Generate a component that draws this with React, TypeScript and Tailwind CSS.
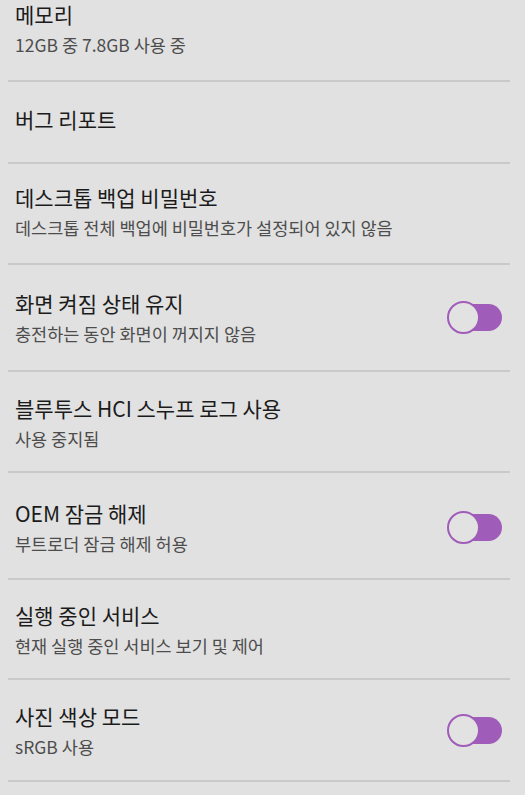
type Row = {
  title: string;
  summary?: string;
  toggle?: boolean;
  pad: string;
};

const rows: Row[] = [
  { title: '메모리', summary: '12GB 중 7.8GB 사용 중', pad: 'pt-0 pb-[23px]' },
  { title: '버그 리포트', pad: 'pt-[23px] pb-[29px]' },
  { title: '데스크톱 백업 비밀번호', summary: '데스크톱 전체 백업에 비밀번호가 설정되어 있지 않음', pad: 'pt-[19px] pb-[23px]' },
  { title: '화면 켜짐 상태 유지', summary: '충전하는 동안 화면이 꺼지지 않음', toggle: true, pad: 'pt-[24px] pb-[24px]' },
  { title: '블루투스 HCI 스누프 로그 사용', summary: '사용 중지됨', pad: 'pt-[22px] pb-[20px]' },
  { title: 'OEM 잠금 해제', summary: '부트로더 잠금 해제 허용', toggle: true, pad: 'pt-[26px] pb-[22px]' },
  { title: '실행 중인 서비스', summary: '현재 실행 중인 서비스 보기 및 제어', pad: 'pt-[21px] pb-[20px]' },
  { title: '사진 색상 모드', summary: 'sRGB 사용', toggle: true, pad: 'pt-[22px] pb-[21px]' },
];

function Toggle() {
  return (
    <div className="relative w-[55px] h-[33px] shrink-0">
      <div className="absolute right-0 top-[3px] h-[27px] w-[50px] rounded-full bg-[#a05cb9]" />
      <div className="absolute left-0 top-0 h-[33px] w-[33px] rounded-full border-2 border-[#a05cb9] bg-[#e2e2e2]" />
    </div>
  );
}

export default function App() {
  return (
    <div
      className="min-h-[795px] w-full bg-[#e1e1e1]"
      style={{ fontFamily: '"Noto Sans CJK KR", "Noto Sans", sans-serif' }}
    >
      <div className="mx-[8px] w-[502px]">
        {rows.map((row) => (
          <div key={row.title} className="border-b-2 border-[#c9c9c9]">
            <div className={`flex items-center pl-[7px] pr-[8px] ${row.pad}`}>
              <div className="flex-1">
                <div className="text-[21px] leading-[28px] text-[#1b1b1b]">{row.title}</div>
                {row.summary && (
                  <div className="mt-[5px] text-[17.5px] leading-[24px] text-[#4d4d4d]">{row.summary}</div>
                )}
              </div>
              {row.toggle && <Toggle />}
            </div>
          </div>
        ))}
      </div>
    </div>
  );
}
